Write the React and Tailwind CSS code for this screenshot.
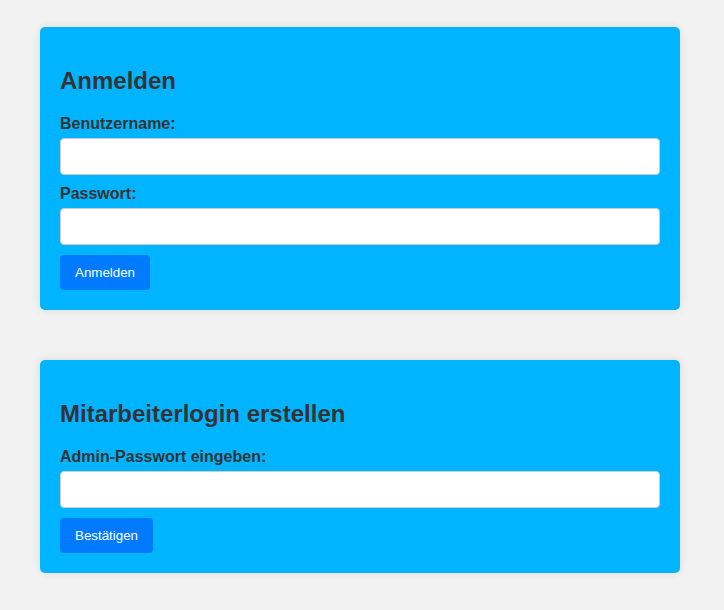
import React from 'react';

// ── Form card ────────────────────────────────────────────────────────────────
function Card({ title, children }) {
  return (
    <div className="bg-[#00b4ff] rounded-[5px] p-5 shadow-[0_0_10px_rgba(0,0,0,0.1)]">
      <h2 className="mt-5 mb-5 text-[24px] leading-[28px] font-bold text-[#333]">{title}</h2>
      {children}
    </div>
  );
}

function Field({ label, type = 'text' }) {
  return (
    <>
      <label className="block mb-[5px] text-[16px] leading-[18px] font-bold text-[#333]">{label}</label>
      <input
        type={type}
        className="block w-full h-[37px] mb-[10px] px-2 bg-white border border-[#ccc] rounded-[4px] outline-none"
      />
    </>
  );
}

function Button({ children }) {
  return (
    <button className="block h-[35px] px-[15px] bg-[#007bff] text-white text-[13.333px] rounded-[4px]">
      {children}
    </button>
  );
}

export default function App() {
  return (
    <div className="min-h-screen bg-[#f2f2f2] px-10 pt-[27px] pb-10 font-['Liberation_Sans',Arial,sans-serif]">
      <div className="w-[640px] flex flex-col gap-[50px]">
        <Card title="Anmelden">
          <Field label="Benutzername:" />
          <Field label="Passwort:" type="password" />
          <Button>Anmelden</Button>
        </Card>

        <Card title="Mitarbeiterlogin erstellen">
          <Field label="Admin-Passwort eingeben:" type="password" />
          <Button>Bestätigen</Button>
        </Card>
      </div>
    </div>
  );
}
